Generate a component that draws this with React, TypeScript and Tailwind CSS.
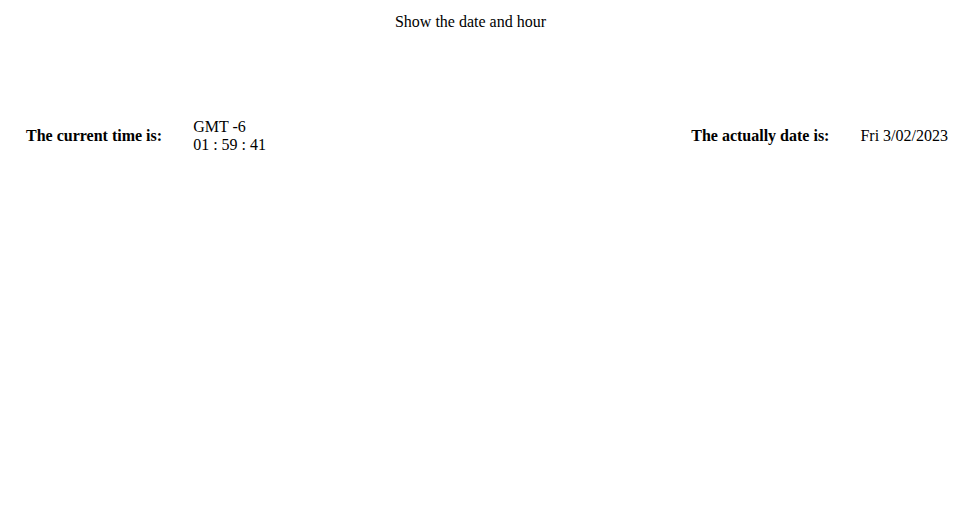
export default function App() {
  return (
    <div className="w-[967px] h-[505px] bg-white text-black text-[16px] leading-[18px]" style={{ fontFamily: '"Liberation Serif", "Times New Roman", serif' }}>
      <div className="pt-[13px] pr-[26px] text-center">Show the date and hour</div>
      <div className="mt-[87px] flex items-center justify-between pl-[26px] pr-[19px]">
        <div className="flex items-center gap-[31px]">
          <div className="font-bold">The current time is:</div>
          <div>
            <div>GMT -6</div>
            <div>01 : 59 : 41</div>
          </div>
        </div>
        <div className="flex items-center gap-[31px]">
          <div className="font-bold">The actually date is:</div>
          <div>Fri 3/02/2023</div>
        </div>
      </div>
    </div>
  );
}
